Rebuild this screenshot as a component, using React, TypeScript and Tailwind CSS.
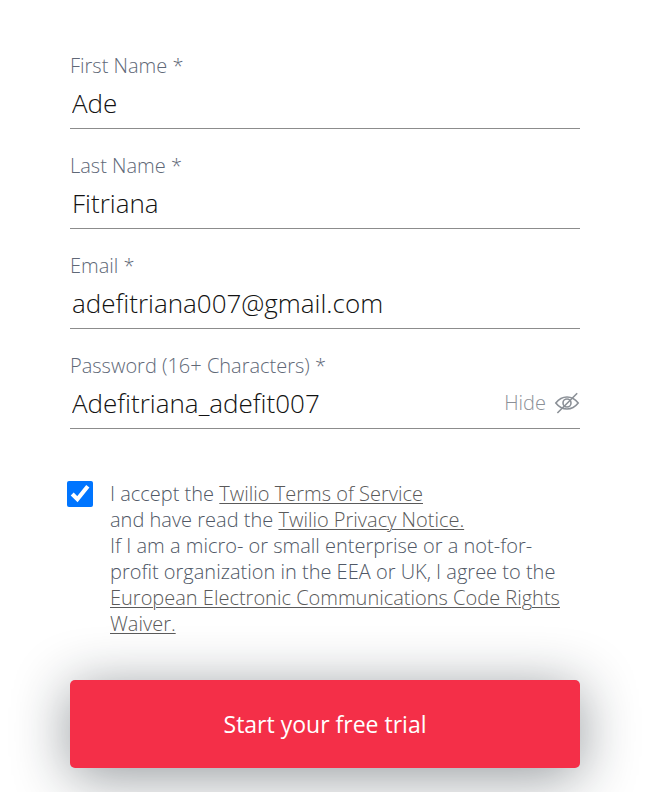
import { useState } from "react";

const labelClass = "block text-[20px] leading-6 font-light text-[#606877]";
const inputClass =
  "block h-[51px] w-full min-w-0 rounded-none border-b border-[#8c8c8c] bg-transparent px-0.5 text-[26px] font-[350] text-[#121212] outline-none";

function TextField({ id, label, type, value }: { id: string; label: string; type: string; value: string }) {
  return (
    <div>
      <label htmlFor={id} className={labelClass}>
        {label}
      </label>
      <input id={id} type={type} defaultValue={value} className={inputClass} />
    </div>
  );
}

function EyeOffIcon() {
  return (
    <svg viewBox="0 0 26 24" className="h-6 w-[26px]" fill="none" stroke="currentColor" strokeWidth="1.6" aria-hidden="true">
      <path d="M1.800 12C5 7.900 8.600 6 13 6S21 7.900 24.200 12C21 16.100 17.400 18 13 18S5 16.100 1.800 12Z" />
      <circle cx="13" cy="12" r="4" />
      <path d="M3.400 22L23.200 2.200" />
    </svg>
  );
}

export default function App() {
  const [visible, setVisible] = useState(true);
  return (
    <main className="min-h-screen bg-white pt-[54px] pr-[69px] pb-6 pl-[70px] font-['Open_Sans',sans-serif]">
      <form onSubmit={(e) => e.preventDefault()}>
        <div className="flex flex-col gap-[25px]">
          <TextField id="first" label="First Name *" type="text" value="Ade" />
          <TextField id="last" label="Last Name *" type="text" value="Fitriana" />
          <TextField id="email" label="Email *" type="text" value="adefitriana007@gmail.com" />
          <div>
            <label htmlFor="password" className={labelClass}>
              Password (16+ Characters) *
            </label>
            <div className="flex items-center border-b border-[#8c8c8c]">
              <input
                id="password"
                type={visible ? "text" : "password"}
                defaultValue="Adefitriana_adefit007"
                className="block h-[50px] min-w-0 flex-1 bg-transparent px-0.5 text-[26px] font-[350] text-[#121212] outline-none"
              />
              <button
                type="button"
                onClick={() => setVisible(!visible)}
                className="flex items-center gap-2 text-[20px] leading-6 font-light text-[#8b9097]"
              >
                {visible ? "Hide" : "Show"}
                <EyeOffIcon />
              </button>
            </div>
          </div>
        </div>

        <div className="mt-[52px] -ml-[3px] flex items-start gap-[17px]">
          <input id="accept" type="checkbox" defaultChecked className="size-[26px] shrink-0 accent-[#0075ff]" />
          <label htmlFor="accept" className="text-[20px] leading-[26px] font-light text-[#505866]">
            I accept the{" "}
            <a href="#terms" className="text-[#5a5a5a] underline decoration-1 underline-offset-2">Twilio Terms of Service</a>
            <br />
            and have read the{" "}
            <a href="#privacy" className="text-[#5a5a5a] underline decoration-1 underline-offset-2">Twilio Privacy Notice.</a>
            <br />
            If I am a micro- or small enterprise or a not-for-
            <br />
            profit organization in the EEA or UK, I agree to the{" "}
            <a href="#waiver" className="text-[#5a5a5a] underline decoration-1 underline-offset-2">
              European Electronic Communications Code Rights Waiver.
            </a>
          </label>
        </div>

        <button
          type="submit"
          className="mt-[43px] block h-[88px] w-full rounded-[5px] bg-[#f42f48] text-[23px] text-white shadow-[0_8px_56px_rgba(18,28,36,0.46)]"
        >
          Start your free trial
        </button>
      </form>
    </main>
  );
}
